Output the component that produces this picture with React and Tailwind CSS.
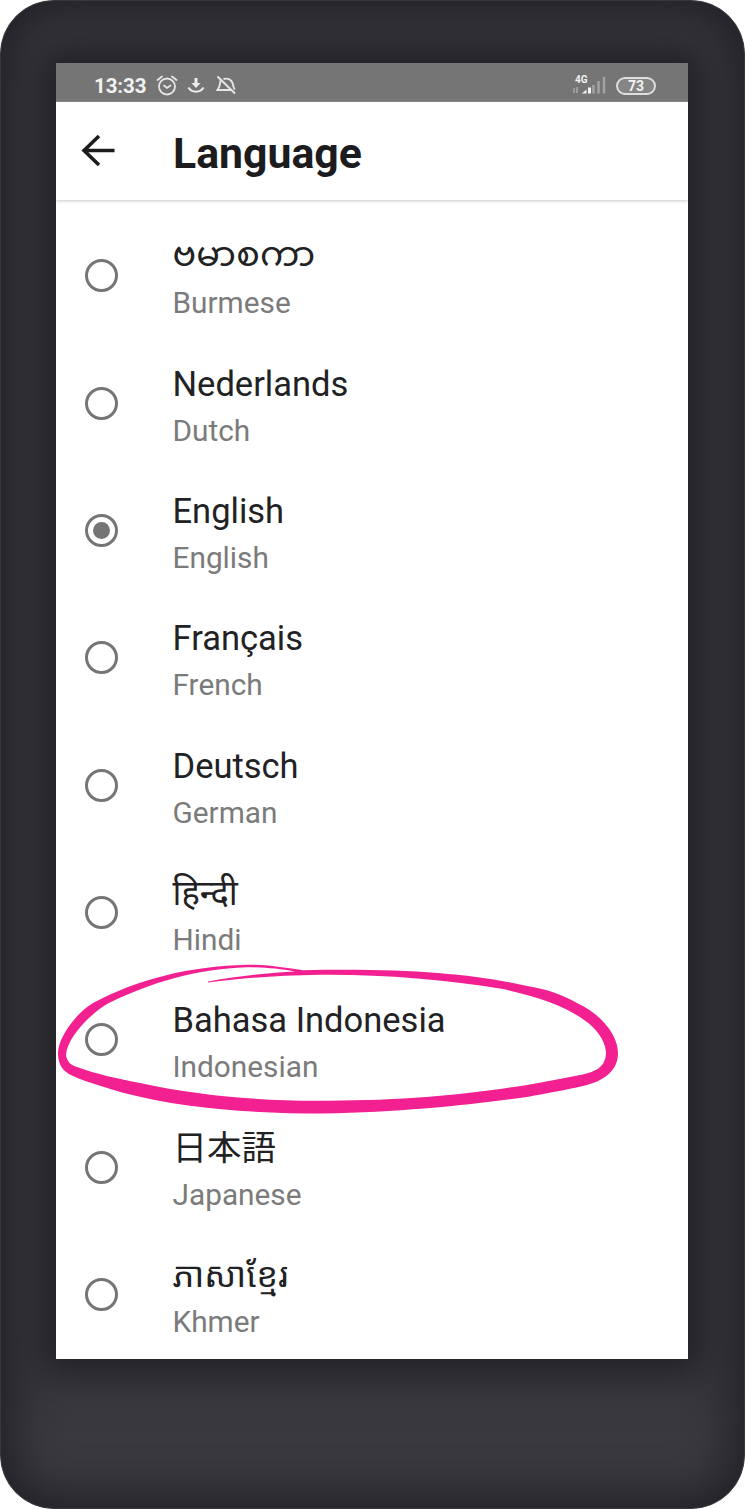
const languages = [
  { native: 'ဗမာစကာ', name: 'Burmese', raised: true },
  { native: 'Nederlands', name: 'Dutch' },
  { native: 'English', name: 'English', selected: true },
  { native: 'Français', name: 'French' },
  { native: 'Deutsch', name: 'German' },
  { native: 'हिन्दी', name: 'Hindi' },
  { native: 'Bahasa Indonesia', name: 'Indonesian' },
  { native: '日本語', name: 'Japanese' },
  { native: 'ភាសាខ្មែរ', name: 'Khmer' },
];

function StatusBar() {
  return (
    <div className="flex h-[39px] shrink-0 items-center bg-[#757575] pt-[7px] pr-[32px] pl-[38px] text-[#f2f2f2]">
      <span className="w-[53px] text-[20.5px] leading-none font-bold tracking-[-0.1px]">13:33</span>
      <svg className="ml-[9px]" width="22" height="22" viewBox="0 0 22 22" fill="none" stroke="#e6e6e6" strokeWidth="1.8" strokeLinecap="round">
        <circle cx="11" cy="11.500" r="8" />
        <path d="M1.500 5 6 1.500M20.500 5 16 1.500M8 10.500l3 2.400 3.500-2.400" />
      </svg>
      <svg className="mb-[3px] ml-[9px]" width="18" height="18" viewBox="0 0 18 18" fill="none" stroke="#ededed" strokeWidth="2">
        <path d="M9 2v6" strokeWidth="3" />
        <path d="M4.500 7h9L9 12z" fill="#ededed" stroke="none" />
        <path d="M1.500 11.500C4.500 17 13.500 17 16.500 11.500" />
      </svg>
      <svg className="mb-[2px] ml-[11px]" width="22" height="20" viewBox="0 0 22 20" fill="none" stroke="#e6e6e6" strokeWidth="1.900">
        <path d="M1.500 1.500 19 18.500M4.500 5.500C4 9 4 12 1.500 15H15M7.500 4C13 2.500 16.500 6 17 9.500c.2 2 .8 3.500 1.700 5" />
      </svg>
      <div className="ml-auto flex items-center">
        <div className="mb-[2px] flex w-[34px] flex-col">
          <span className="h-[8px] pl-[2px] text-[10px] leading-[8px] font-bold">4G</span>
          <svg width="34" height="10" viewBox="0 0 34 10" overflow="visible">
            <path d="M1 4v5M4 3v6" stroke="#b0b0b0" strokeWidth="1.300" />
            <path d="M9 9.500h4.500V5.500zM15 9.500V3.500h3v6z" fill="#f5f5f5" />
            <path d="M20.500 9.500V1M25.500 9.500V-3M31 9.500V-7" stroke="#a3a3a3" strokeWidth="2.500" />
          </svg>
        </div>
        <div className="ml-[9px] flex h-[18px] w-[40px] items-center justify-center rounded-full border-[2px] border-[#dedede] bg-[#858585] text-[14px] leading-none font-bold">73</div>
      </div>
    </div>
  );
}

function Header() {
  return (
    <div className="flex h-[98px] shrink-0 items-center shadow-[0_1px_3px_#c8c8c8]">
      <svg className="ml-[25px]" width="34" height="34" viewBox="0 0 34 34" fill="none" stroke="#1c1c1e" strokeWidth="3.600">
        <path d="M18 2 3 16.500l15 14.500M3 16.500h30.500" />
      </svg>
      <h1 className="ml-[58px] pt-[5px] text-[42.800px] leading-none font-bold text-[#1c1c1e]">Language</h1>
    </div>
  );
}

function LanguageRow({ native, name, selected, raised }) {
  return (
    <div className="flex h-[127.300px] shrink-0 items-center">
      <div className="ml-[29px] flex size-[33px] items-center justify-center rounded-full border-[3px] border-[#757575]">
        {selected && <div className="size-[17px] rounded-full bg-[#757575]" />}
      </div>
      <div className="ml-[54.500px] pt-[9px] whitespace-nowrap">
        <div className={raised ? 'h-[47px] text-[35px] leading-[43px] tracking-[0.200px] text-[#222224]' : 'h-[47px] text-[34.500px] leading-[47px] text-[#222224]'}>{native}</div>
        <div className="h-[47px] text-[29.800px] leading-[46px] text-[#7b7b7b]">{name}</div>
      </div>
    </div>
  );
}

function HandDrawnCircle() {
  return (
    <svg className="pointer-events-none absolute top-0 left-0" width="745" height="1509" viewBox="0 0 745 1509" fill="#f22090">
      <path
        fillRule="evenodd"
        d="M303 970.300C277 966.500 268 964.700 247 964.700C190 966 138 979 93 1003C76 1013 58 1038 58 1053C58 1066 64 1072 73 1076C88 1083 105 1087 123 1092.700C185 1109 256 1113.500 323 1113.500C405 1112 470 1105 527 1097C548 1093 566 1090 583 1086C605 1081 618 1070 618 1053C618 1035 601 1014 577 1003C561 994 546 989 527 986C475 974 405 968 303 970.300Z
        M295 971.500C279 969 267 967.300 247 967.300C195 969 150 983 109 1003C92 1012 67 1037 66 1055C67 1062 71 1065 77 1067C96 1074 119 1079 140 1083C200 1096 260 1101 323 1100.700C405 1101 470 1094 527 1085C546 1082 563 1078 580 1075C596 1072 606 1067 606 1052C605 1039 595 1028 587 1022C566 1006 539 997 503 989C445 979 377 974 320 974.700C275 975.500 243 978 208 982.500L208 981.500C240 976 270 972.500 295 971.500Z"
      />
    </svg>
  );
}

export default function App() {
  return (
    <div className="relative h-[1509px] w-[745px] overflow-hidden bg-white font-['Roboto','Noto_Sans','Noto_Sans_Devanagari','Noto_Sans_Myanmar','Noto_Sans_Khmer','Noto_Sans_CJK_JP',sans-serif]">
      <div className="h-full w-full rounded-[54px] border border-[#39383e] bg-[#3a393e] px-[55px] pt-[62px] shadow-[inset_0_0_44px_12px_#222127]">
        <div className="flex h-[1296px] w-[632px] flex-col overflow-hidden bg-white shadow-[0_0_36px_16px_#222127]">
          <StatusBar />
          <Header />
          <div className="flex flex-col pt-[12.300px]">
            {languages.map((language) => (
              <LanguageRow key={language.name} {...language} />
            ))}
          </div>
        </div>
      </div>
      <HandDrawnCircle />
    </div>
  );
}
